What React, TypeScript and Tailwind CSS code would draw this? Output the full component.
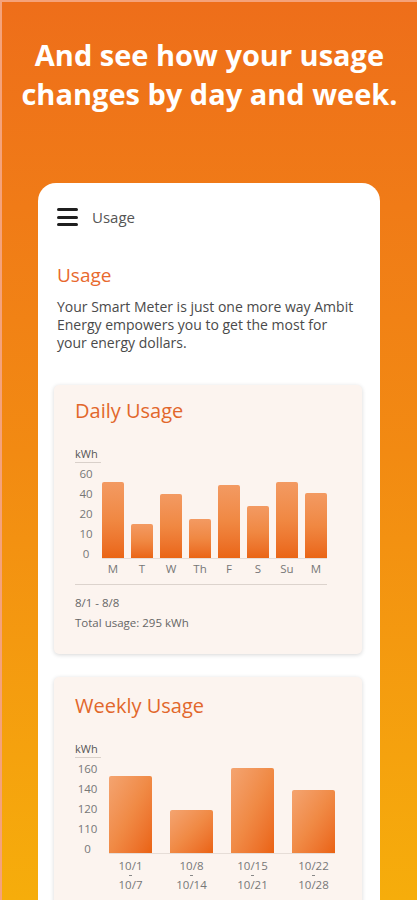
import React from "react";

interface Bar {
  label: string;
  height: number;
}

interface WeekBar {
  from: string;
  to: string;
  height: number;
}

const dailyBars: Bar[] = [
  { label: "M", height: 76 },
  { label: "T", height: 34 },
  { label: "W", height: 64 },
  { label: "Th", height: 39 },
  { label: "F", height: 73 },
  { label: "S", height: 52 },
  { label: "Su", height: 76 },
  { label: "M", height: 65 },
];

const weeklyBars: WeekBar[] = [
  { from: "10/1", to: "10/7", height: 77 },
  { from: "10/8", to: "10/14", height: 43 },
  { from: "10/15", to: "10/21", height: 85 },
  { from: "10/22", to: "10/28", height: 63 },
];

const font = { fontFamily: '"Open Sans", "Noto Sans", sans-serif' };

function KwhLabel() {
  return (
    <div className="mt-[22px] inline-block border-b border-[#d9d0ca] pb-[1px] pr-[3px] text-[11px] leading-[14px] text-[#555]">
      kWh
    </div>
  );
}

function DailyCard() {
  return (
    <div className="ml-4 w-[308px] rounded-[5px] bg-[#fcf4ef] pb-[21px] pl-[21px] pt-3 shadow-[0_1px_4px_rgba(0,0,0,0.16)]">
      <h2 className="text-[20px] leading-7 text-[#e2672b]">Daily Usage</h2>
      <KwhLabel />
      <div className="flex w-[252px] items-start">
        <div className="flex w-[23px] flex-col text-center text-[11.5px] leading-5 text-[#777]">
          {["60", "40", "20", "10", "0"].map((v) => (
            <span key={v}>{v}</span>
          ))}
        </div>
        <div className="ml-[5px] flex flex-col">
          <div className="flex h-[95px] items-end gap-[7px] border-b border-[#e6ddd7]">
            {dailyBars.map((b, i) => (
              <div
                key={i}
                className="w-[22px] rounded-t-[2px] bg-linear-to-b from-[#f39a62] via-[#f08842] to-[#ea6514]"
                style={{ height: b.height }}
              />
            ))}
          </div>
          <div className="mt-[3px] flex gap-[7px] text-[11.5px] leading-[14px] text-[#777]">
            {dailyBars.map((b, i) => (
              <span key={i} className="w-[22px] text-center">
                {b.label}
              </span>
            ))}
          </div>
        </div>
      </div>
      <div className="mt-2 w-[252px] border-t border-[#dcd3cd]" />
      <div className="mt-2 text-[11.5px] leading-5 text-[#666]">
        <p>8/1 - 8/8</p>
        <p>Total usage: 295 kWh</p>
      </div>
    </div>
  );
}

function WeeklyCard() {
  return (
    <div className="ml-4 mt-[23px] w-[308px] rounded-[5px] bg-[#fcf4ef] pb-6 pl-[21px] pt-[15px] shadow-[0_1px_4px_rgba(0,0,0,0.16)]">
      <h2 className="text-[20px] leading-7 text-[#e2672b]">Weekly Usage</h2>
      <KwhLabel />
      <div className="flex items-start">
        <div className="flex w-[25px] flex-col text-center text-[11.5px] leading-5 text-[#777]">
          {["160", "140", "120", "110", "0"].map((v) => (
            <span key={v}>{v}</span>
          ))}
        </div>
        <div className="ml-[9px] flex flex-col">
          <div className="flex h-[95px] items-end gap-[18px] border-b border-[#e6ddd7]">
            {weeklyBars.map((b) => (
              <div
                key={b.from}
                className="w-[43px] rounded-t-[2px] bg-linear-to-br from-[#f4a470] via-[#f08a45] to-[#ea6210]"
                style={{ height: b.height }}
              />
            ))}
          </div>
          <div className="mt-[2px] flex gap-[18px] text-[11.5px] leading-[19px] text-[#777]">
            {weeklyBars.map((b) => (
              <div key={b.from} className="flex w-[43px] flex-col items-center">
                <span>{b.from}</span>
                <span className="h-px w-[3px] bg-[#888]" />
                <span className="-mt-px">{b.to}</span>
              </div>
            ))}
          </div>
        </div>
      </div>
      <div className="mt-[6px] w-[261px] border-t border-[#dcd3cd]" />
      <div className="h-16" />
    </div>
  );
}

export default function App() {
  return (
    <div
      className="h-[900px] w-[417px] overflow-hidden border-l-2 border-t-2 border-[#f5a27a] bg-linear-to-b from-[#ee6e1a] via-[#f28a12] to-[#f6ad0b]"
      style={font}
    >
      <h1 className="pt-[33px] text-center text-[29px] font-bold leading-[39px] text-white">
        And see how your usage
        <br />
        changes by day and week.
      </h1>

      <div className="ml-[36px] mt-[70px] w-[342px] rounded-t-[18px] bg-white pb-10 pt-[24px]">
        <div className="flex h-5 items-center pl-[19px]">
          <div className="flex w-[21px] flex-col gap-[4.5px]">
            <span className="h-[3px] rounded-full bg-[#1f1f1f]" />
            <span className="h-[3px] rounded-full bg-[#1f1f1f]" />
            <span className="h-[3px] rounded-full bg-[#1f1f1f]" />
          </div>
          <span className="ml-[14px] text-[15px] text-[#555]">Usage</span>
        </div>

        <div className="pl-[19px] pr-[24px]">
          <h2 className="mt-[35px] text-[19px] leading-[26px] text-[#e8692d]">Usage</h2>
          <p className="mt-[10px] text-[14px] leading-[18px] text-[#4a4a4a]">
            Your Smart Meter is just one more way Ambit Energy empowers you to get the most for
            your energy dollars.
          </p>
        </div>

        <div className="mt-[33px]">
          <DailyCard />
          <WeeklyCard />
        </div>
      </div>
    </div>
  );
}
